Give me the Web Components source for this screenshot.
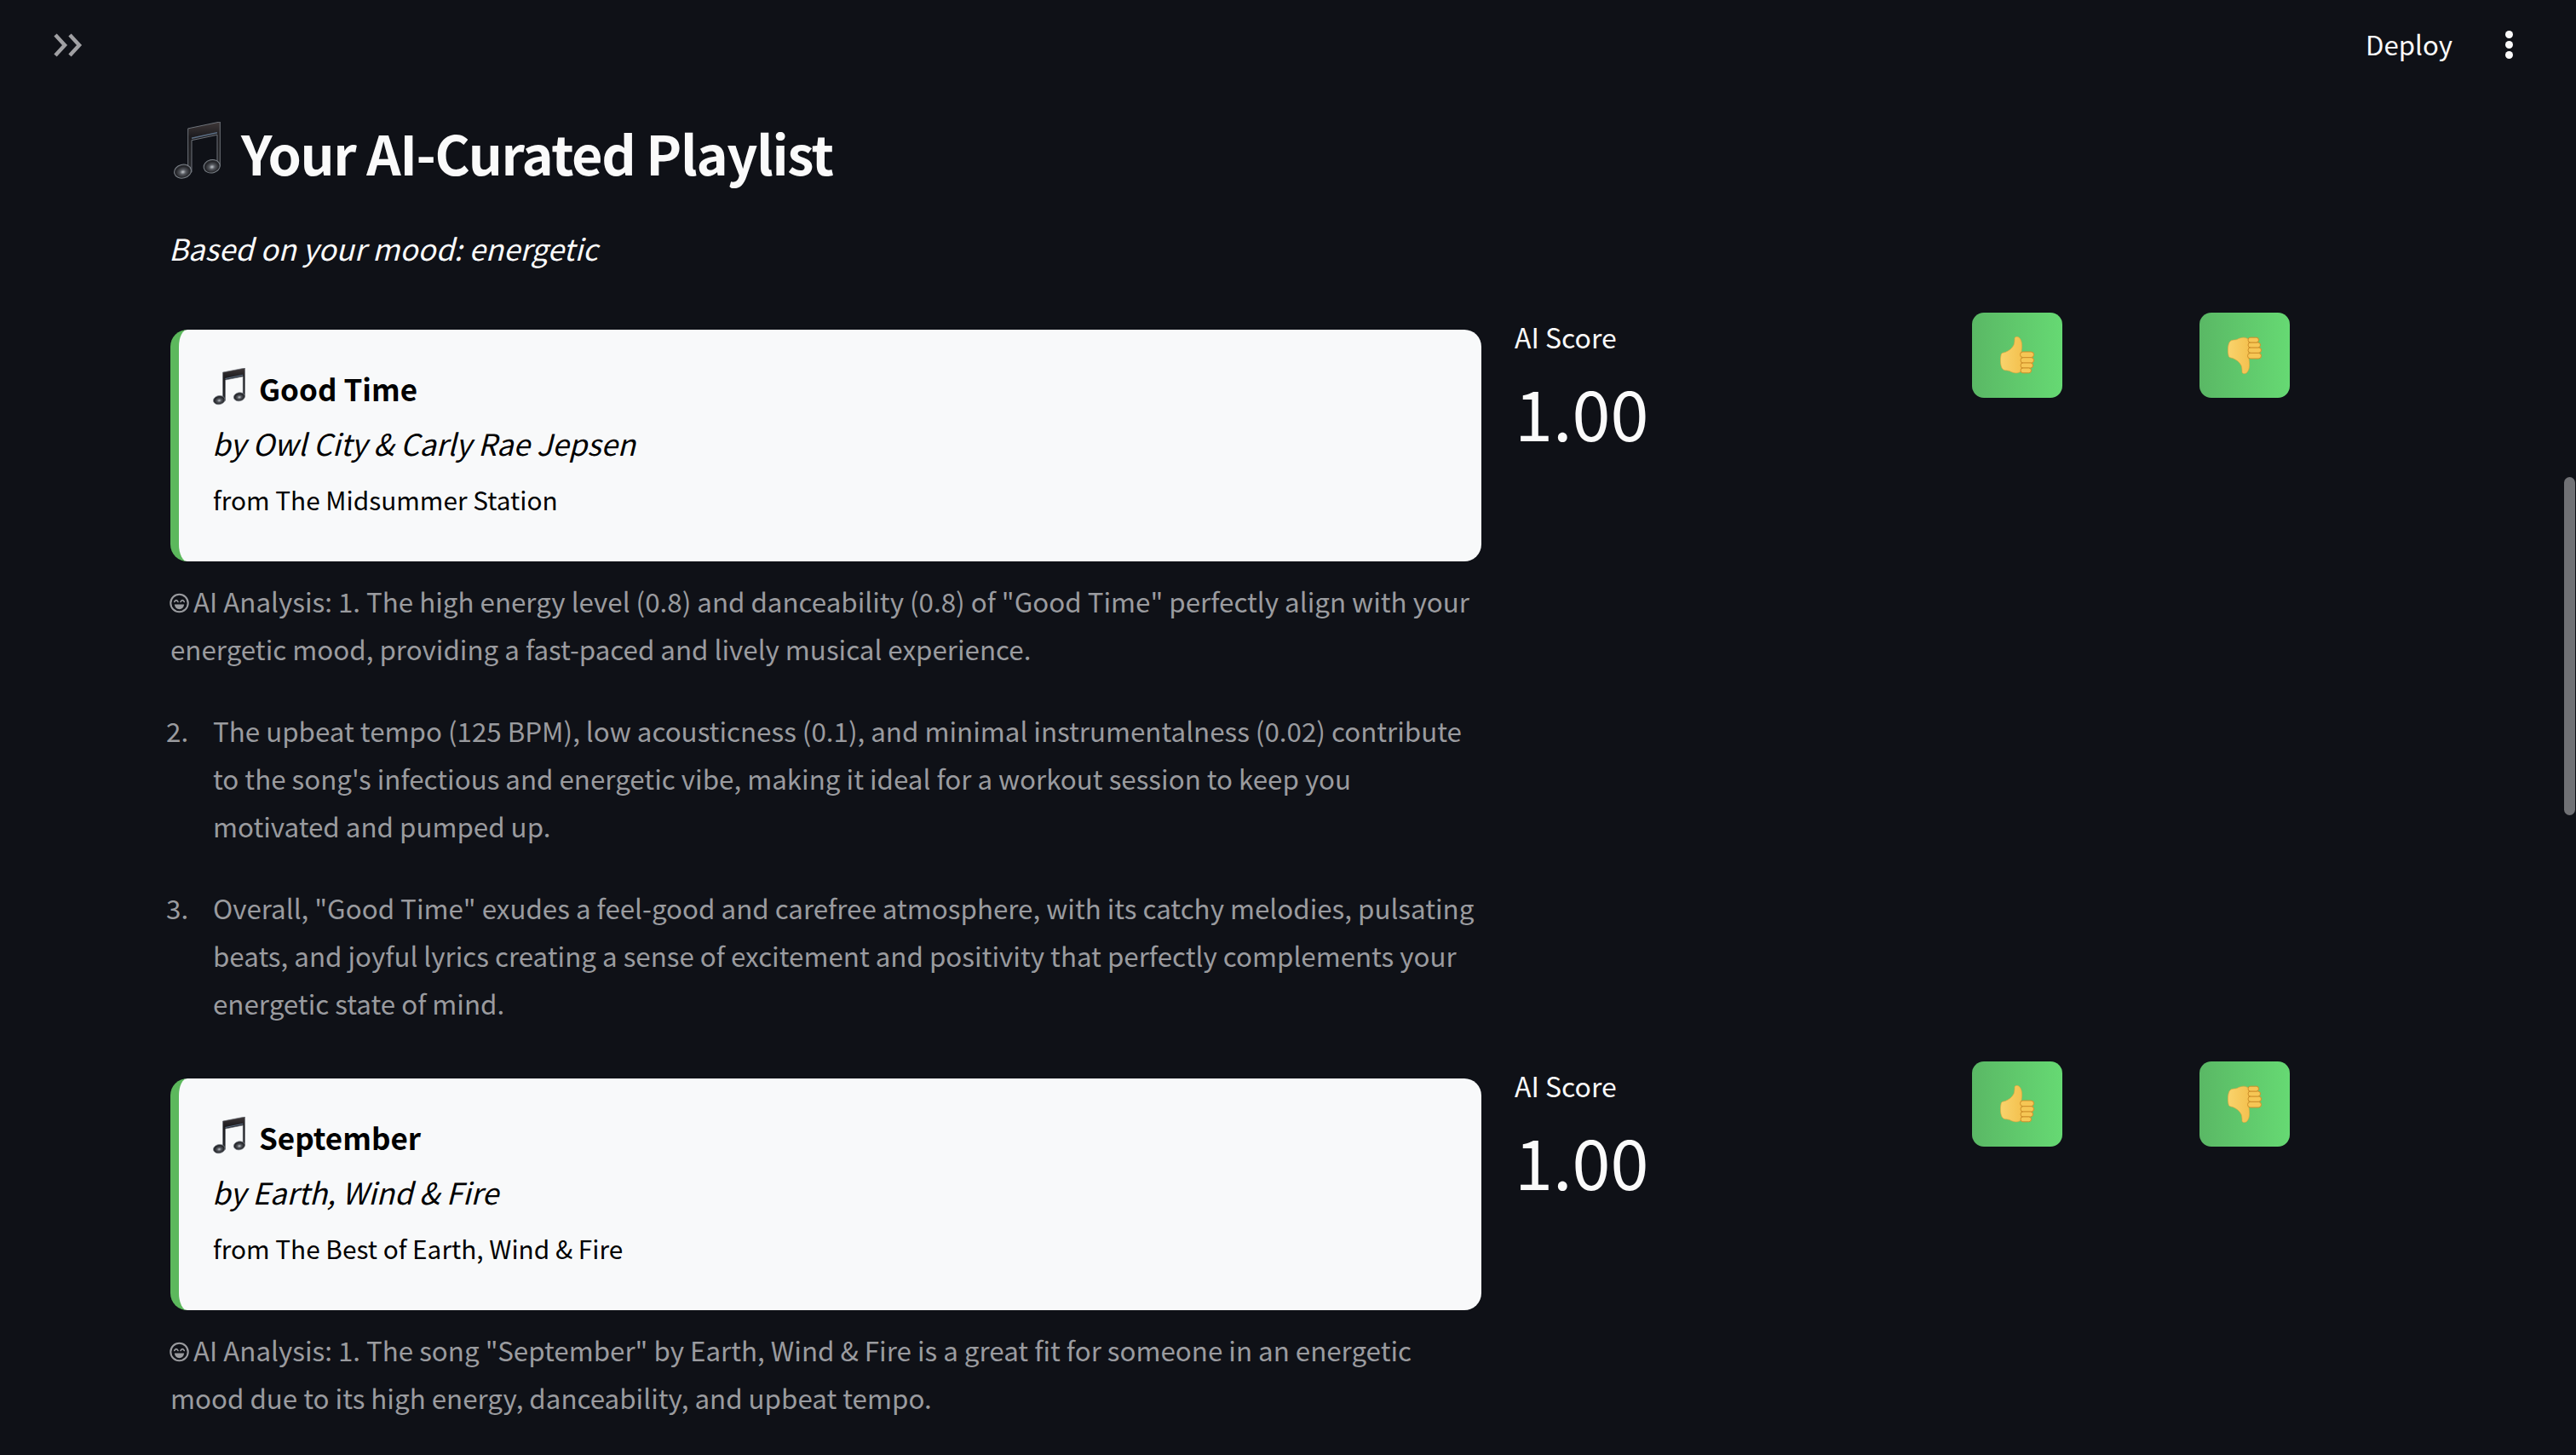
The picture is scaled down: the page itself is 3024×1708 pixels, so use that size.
<!DOCTYPE html>
<html lang="en">
<head>
<meta charset="utf-8">
<title>Your AI-Curated Playlist</title>
<style>
    html, body { margin: 0; height: 100%; overflow: hidden; background: #0f1117; }
    body { font-family: "Noto Sans CJK SC", "Source Sans Pro", sans-serif; color: #fafafa; }
</style>
</head>
<body>
<template id="note-tpl">
    <style>
        :host { display: inline-block; width: 55px; height: 68px; line-height: 0; }
        svg { display: block; width: 100%; height: 100%; }
    </style>
    <svg viewBox="0 0 55 69" preserveAspectRatio="none" aria-hidden="true">
        <defs>
            <linearGradient id="n" x1="0" y1="0" x2="0" y2="1">
                <stop offset="0" stop-color="#3f3839"/>
                <stop offset=".3" stop-color="#1c1b1e"/>
                <stop offset="1" stop-color="#26282c"/>
            </linearGradient>
            <radialGradient id="h" cx=".5" cy=".55" r=".6">
                <stop offset="0" stop-color="#c4c9ce"/>
                <stop offset=".3" stop-color="#55585e"/>
                <stop offset=".7" stop-color="#222327"/>
                <stop offset="1" stop-color="#3c3f44"/>
            </radialGradient>
        </defs>
        <path d="M16.7 8 54.3 0 V53 H51 V15.5 L21 22 V60 H16.7 Z" fill="url(#n)" stroke="#6f747b" stroke-width="1"/>
        <path d="M21 19.500 51 13" fill="none" stroke="#5c6f85" stroke-width="1.500"/>
        <ellipse cx="10.5" cy="59" rx="10" ry="8" transform="rotate(-14 10.5 59)" fill="url(#h)" stroke="#7b8188" stroke-width="1"/>
        <ellipse cx="44.7" cy="53" rx="9.6" ry="7.8" transform="rotate(-14 44.7 53)" fill="url(#h)" stroke="#7b8188" stroke-width="1"/>
    </svg>
</template>

<template id="thumb-tpl">
    <style>
        :host { display: block; width: 40px; height: 44px; line-height: 0; }
        svg { display: block; width: 100%; height: 100%; }
    </style>
    <svg viewBox="0 0 40 44" aria-hidden="true">
        <defs>
            <linearGradient id="t" x1="0" y1="0" x2="1" y2="0">
                <stop offset="0" stop-color="#f9d36c"/>
                <stop offset="1" stop-color="#f4c14f"/>
            </linearGradient>
        </defs>
        <g class="hand">
            <path d="M1 22C1 19.5 3 19 6 18.5C10 17 14 14 16 10C17 7 17 4 17 2C17.500 0 21 -.5 23 2C26 6 26 11 25 18V40C22 44 16 43.500 11 40.500C8 39.500 4 40.500 2 37C0 33 0 26 1 22Z" fill="url(#t)" stroke="#dfa33a" stroke-width=".6"/>
            <rect x="23.500" y="18" width="16" height="6.600" rx="3.300" fill="#f6c655" stroke="#cf8f2a" stroke-width="1"/>
            <rect x="24" y="24.700" width="15.500" height="6.400" rx="3.200" fill="#f6c655" stroke="#cf8f2a" stroke-width="1"/>
            <rect x="24" y="31" width="14.500" height="6" rx="3" fill="#f6c655" stroke="#cf8f2a" stroke-width="1"/>
            <rect x="24" y="37" width="12.500" height="5.800" rx="2.900" fill="#f6c655" stroke="#cf8f2a" stroke-width="1"/>
        </g>
    </svg>
</template>

<script>
class MusicNote extends HTMLElement {
    constructor() {
        super();
        this.attachShadow({ mode: "open" });
        this.shadowRoot.appendChild(document.getElementById("note-tpl").content.cloneNode(true));
    }
}

class ThumbIcon extends HTMLElement {
    constructor() {
        super();
        this.attachShadow({ mode: "open" });
        this.shadowRoot.appendChild(document.getElementById("thumb-tpl").content.cloneNode(true));
    }

    connectedCallback() {
        if (this.getAttribute("dir") == "down") {
            this.shadowRoot.querySelector(".hand").setAttribute("transform", "translate(0 44) scale(1 -1)");
        }
    }
}

class FaceIcon extends HTMLElement {
    constructor() {
        super();
        this.attachShadow({ mode: "open" });
        this.shadowRoot.innerHTML = `
        <style>
            :host { display: inline-block; width: 25px; height: 24px; margin: 0 4px 0 -2px; vertical-align: -1px; }
            svg { display: block; width: 100%; height: 100%; }
        </style>
        <svg viewBox="0 0 24 22" aria-hidden="true" fill="none" stroke="#9a9b9f" stroke-width="2" stroke-linecap="round">
            <circle cx="12" cy="11" r="9.800"/>
            <path d="M6.500 9.500Q8.500 6 10.500 9.500M13.500 9.500Q15.500 6 17.500 9.500" stroke-width="1.600"/>
            <path d="M6.500 12.500H17.500Q16.500 18 12 18Q7.500 18 6.500 12.500Z" fill="#9a9b9f" stroke="none"/>
        </svg>
        `;
    }
}

class AppHeader extends HTMLElement {
    constructor() {
        super();
        this.attachShadow({ mode: "open" });
        this.shadowRoot.innerHTML = `
        <style>
            :host {
                display: flex;
                align-items: center;
                justify-content: space-between;
                height: 106px;
                padding: 0 74px 0 62px;
                box-sizing: border-box;
            }
            .expand { display: block; width: 36px; height: 30px; margin-top: -1px; }
            .right { display: flex; align-items: center; gap: 62px; }
            .deploy { font-size: 31.200px; line-height: 40px; color: #fafafa; margin-top: -2px; }
            .dots { display: flex; flex-direction: column; gap: 3px; margin-top: -2px; }
            .dots i { display: block; width: 9px; height: 9px; border-radius: 50%; background: #fafafa; }
        </style>
        <svg class="expand" viewBox="0 0 36 30" aria-hidden="true" fill="none" stroke="#a0a0a3" stroke-width="4.500">
            <path d="M3 3 14 15 3 27M20 3 31 15 20 27"/>
        </svg>
        <div class="right">
            <span class="deploy">Deploy</span>
            <div class="dots"><i></i><i></i><i></i></div>
        </div>
        `;
    }
}

class SongCard extends HTMLElement {
    constructor() {
        super();
        this.attachShadow({ mode: "open" });
        this.shadowRoot.innerHTML = `
        <style>
            :host {
                display: block;
                box-sizing: border-box;
                height: 272px;
                padding: 46px 40px 0 40px;
                border-radius: 20px;
                border-left: 10px solid #5cb85c;
                background: #f8f9fa;
                color: #000;
            }
            .title { display: flex; align-items: center; gap: 16px; height: 46px; font-size: 35px; font-weight: 700; line-height: 46px; }
            .title music-note { width: 38px; height: 44px; margin-top: -4px; }
            .artist { margin: 18px 0 0 -1px; font-size: 34.800px; font-style: italic; line-height: 46px; }
            .album { margin-top: 21px; font-size: 29.800px; line-height: 44px; }
        </style>
        <div class="title"><music-note></music-note><span><slot name="title"></slot></span></div>
        <div class="artist"><slot name="artist"></slot></div>
        <div class="album"><slot name="album"></slot></div>
        `;
    }
}

class ScoreMetric extends HTMLElement {
    constructor() {
        super();
        this.attachShadow({ mode: "open" });
        this.shadowRoot.innerHTML = `
        <style>
            :host { display: block; padding-top: 8px; color: #fafafa; }
            .label { font-size: 32px; line-height: 40px; }
            .value { margin-top: 16px; font-size: 81px; font-weight: 400; line-height: 104px; }
        </style>
        <div class="label"><slot name="label"></slot></div>
        <div class="value"><slot name="value"></slot></div>
        `;
    }
}

class VoteButton extends HTMLElement {
    constructor() {
        super();
        this.attachShadow({ mode: "open" });
        this.shadowRoot.innerHTML = `
        <style>
            :host {
                display: flex;
                align-items: center;
                justify-content: center;
                width: 106px;
                height: 100px;
                border-radius: 14px;
                background: linear-gradient(90deg, #5ab865, #66d973);
            }
        </style>
        <slot></slot>
        `;
    }
}

class SongRow extends HTMLElement {
    constructor() {
        super();
        this.attachShadow({ mode: "open" });
        this.shadowRoot.innerHTML = `
        <style>
            :host {
                display: grid;
                grid-template-columns: 1539px 498px 228px 228px;
                column-gap: 39px;
            }
            .card { padding-top: 20px; }
        </style>
        <div class="card"><slot name="card"></slot></div>
        <div><slot name="score"></slot></div>
        <div><slot name="up"></slot></div>
        <div><slot name="down"></slot></div>
        `;
    }
}

class AnalysisText extends HTMLElement {
    constructor() {
        super();
        this.attachShadow({ mode: "open" });
        this.shadowRoot.innerHTML = `
        <style>
            :host {
                display: block;
                margin-top: 19px;
                font-size: 31.340px;
                line-height: 56px;
                color: #9a9b9f;
                white-space: nowrap;
            }
            ::slotted(p) { margin: 0 0 40px; }
        </style>
        <slot></slot>
        `;
    }
}

class AnalysisItem extends HTMLElement {
    constructor() {
        super();
        this.attachShadow({ mode: "open" });
        this.shadowRoot.innerHTML = `
        <style>
            :host { display: flex; margin: 0 0 40px -5px; }
            .num { flex: 0 0 55px; }
        </style>
        <span class="num"><slot name="num"></slot></span>
        <div><slot></slot></div>
        `;
    }
}

class ScrollThumb extends HTMLElement {
    constructor() {
        super();
        this.attachShadow({ mode: "open" });
        this.shadowRoot.innerHTML = `
        <style>
            :host {
                position: absolute;
                top: 560px;
                right: 1px;
                width: 13px;
                height: 397px;
                border-radius: 7px;
                background: #707175;
            }
        </style>
        `;
    }
}

class PageMain extends HTMLElement {
    constructor() {
        super();
        this.attachShadow({ mode: "open" });
        this.shadowRoot.innerHTML = `
        <style>
            :host { display: block; padding: 0 200px; }
            .heading { display: flex; align-items: center; gap: 24px; height: 80px; margin-top: 33px; font-size: 63px; font-weight: 700; letter-spacing: -1.400px; line-height: 80px; color: #fafafa; }
            .heading music-note { margin: -4px 0 0 4px; }
            .mood { margin: 44px 0 48px -2px; font-size: 34.800px; font-style: italic; line-height: 56px; color: #fafafa; }
        </style>
        <div class="heading"><music-note></music-note><span><slot name="heading"></slot></span></div>
        <div class="mood"><slot name="mood"></slot></div>
        <slot></slot>
        `;
    }
}

customElements.define("music-note", MusicNote);
customElements.define("thumb-icon", ThumbIcon);
customElements.define("face-icon", FaceIcon);
customElements.define("app-header", AppHeader);
customElements.define("song-card", SongCard);
customElements.define("score-metric", ScoreMetric);
customElements.define("vote-button", VoteButton);
customElements.define("song-row", SongRow);
customElements.define("analysis-text", AnalysisText);
customElements.define("analysis-item", AnalysisItem);
customElements.define("scroll-thumb", ScrollThumb);
customElements.define("page-main", PageMain);
</script>

<app-header></app-header>
<page-main>
    <span slot="heading">Your AI-Curated Playlist</span>
    <span slot="mood">Based on your mood: energetic</span>

    <song-row>
        <song-card slot="card">
            <span slot="title">Good Time</span>
            <span slot="artist">by Owl City &amp; Carly Rae Jepsen</span>
            <span slot="album">from The Midsummer Station</span>
        </song-card>
        <score-metric slot="score"><span slot="label">AI Score</span><span slot="value">1.00</span></score-metric>
        <vote-button slot="up"><thumb-icon dir="up"></thumb-icon></vote-button>
        <vote-button slot="down"><thumb-icon dir="down"></thumb-icon></vote-button>
    </song-row>
    <analysis-text>
        <p><face-icon></face-icon>AI Analysis: 1. The high energy level (0.8) and danceability (0.8) of "Good Time" perfectly align with your<br>energetic mood, providing a fast-paced and lively musical experience.</p>
        <analysis-item><span slot="num">2.</span>The upbeat tempo (125 BPM), low acousticness (0.1), and minimal instrumentalness (0.02) contribute<br>to the song's infectious and energetic vibe, making it ideal for a workout session to keep you<br>motivated and pumped up.</analysis-item>
        <analysis-item><span slot="num">3.</span>Overall, "Good Time" exudes a feel-good and carefree atmosphere, with its catchy melodies, pulsating<br>beats, and joyful lyrics creating a sense of excitement and positivity that perfectly complements your<br>energetic state of mind.</analysis-item>
    </analysis-text>

    <song-row style="margin-top:1px">
        <song-card slot="card">
            <span slot="title">September</span>
            <span slot="artist">by Earth, Wind &amp; Fire</span>
            <span slot="album">from The Best of Earth, Wind &amp; Fire</span>
        </song-card>
        <score-metric slot="score"><span slot="label">AI Score</span><span slot="value">1.00</span></score-metric>
        <vote-button slot="up"><thumb-icon dir="up"></thumb-icon></vote-button>
        <vote-button slot="down"><thumb-icon dir="down"></thumb-icon></vote-button>
    </song-row>
    <analysis-text>
        <p><face-icon></face-icon>AI Analysis: 1. The song "September" by Earth, Wind &amp; Fire is a great fit for someone in an energetic<br>mood due to its high energy, danceability, and upbeat tempo.</p>
    </analysis-text>
</page-main>
<scroll-thumb></scroll-thumb>
</body>
</html>
